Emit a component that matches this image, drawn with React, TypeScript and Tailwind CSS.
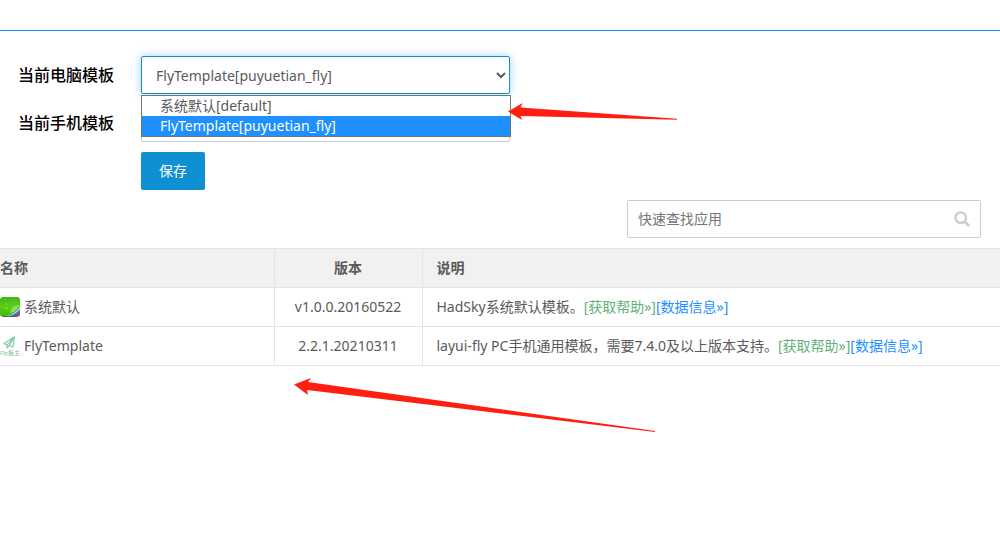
import React from 'react';

const TEMPLATES = ['系统默认[default]', 'FlyTemplate[puyuetian_fly]'];

const DefaultIcon: React.FC = () => (
  <svg width="20" height="20" viewBox="0 0 20 20" className="shrink-0" aria-hidden="true">
    <defs>
      <linearGradient id="leaf" x1="0" y1="0" x2="0" y2="1">
        <stop offset="0" stopColor="#45b51f" />
        <stop offset="0.5" stopColor="#58d012" />
        <stop offset="1" stopColor="#3fb80f" />
      </linearGradient>
      <clipPath id="tile">
        <rect x="0" y="0" width="20" height="20" rx="4" />
      </clipPath>
    </defs>
    <g clipPath="url(#tile)">
      <rect width="20" height="20" fill="#5a5f66" />
      <rect width="20" height="19" fill="url(#leaf)" />
      <path d="M6 19 C12 18 17 15 20 10 V19 Z" fill="#d4e6f5" />
      <path d="M8 19 C13 18 18 15 20 12 V19 Z" fill="#2680dd" />
      <path d="M13 19 C16 18 19 17 20 15 V19 Z" fill="#dc2f3a" />
      <path d="M10 16 C11 11 14 8 19 8 C18 12 15 15 10 16 Z" fill="#8fd67a" />
      <circle cx="6" cy="7" r="0.6" fill="#9be870" />
      <circle cx="14" cy="5" r="0.6" fill="#9be870" />
      <path d="M5 11 Q7 12 8 11" fill="none" stroke="#9be870" strokeWidth="0.8" />
    </g>
  </svg>
);

const FlyIcon: React.FC = () => (
  <svg width="20" height="20" viewBox="0 0 20 20" className="shrink-0" aria-hidden="true">
    <g fill="none" stroke="#84caa0" strokeWidth="1.1" strokeLinejoin="round">
      <path d="M14.5 0.8 L4 7.5 L7 9 L14.5 0.8 L13 11 L9.2 9.4 L14.5 0.8" />
      <path d="M7 9 V12 L9.2 9.8" />
    </g>
    <text x="0" y="19" fontSize="6" fontWeight="500" fill="#84caa0" className="font-['Noto_Sans','Noto_Sans_CJK_SC',sans-serif]">Fly板主</text>
  </svg>
);

const ROWS = [
  { name: '系统默认', Icon: DefaultIcon, version: 'v1.0.0.20160522', note: 'HadSky系统默认模板。' },
  { name: 'FlyTemplate', Icon: FlyIcon, version: '2.2.1.20210311', note: 'layui-fly PC手机通用模板，需要7.4.0及以上版本支持。' },
];

const TemplateForm: React.FC = () => (
  <form className="px-[18px] pt-[25px] flex flex-col gap-[10px]" onSubmit={(e) => e.preventDefault()}>
    <div className="flex items-center">
      <label htmlFor="pc" className="w-[123px] shrink-0 text-base font-medium text-black">当前电脑模板</label>
      <div className="relative flex-1 max-w-[369px]">
        <select
          id="pc"
          defaultValue={TEMPLATES[1]}
          className="block w-full h-[38px] px-[10px] bg-white border border-[#0e90d2] rounded-xs outline-none shadow-[0_0_8px_rgba(14,144,210,0.4)]"
        >
          {TEMPLATES.map((t) => <option key={t}>{t}</option>)}
        </select>
        <ul role="listbox" aria-label="当前电脑模板" className="absolute z-10 top-full left-0 -right-px mt-px bg-white border border-[#767676] leading-5">
          <li role="option" aria-selected="false" className="px-[18px]">{TEMPLATES[0]}</li>
          <li role="option" aria-selected="true" className="px-[18px] bg-[#1e90ff] text-white">{TEMPLATES[1]}</li>
        </ul>
      </div>
    </div>
    <div className="flex items-center">
      <label htmlFor="mobile" className="w-[123px] shrink-0 text-base font-medium text-black">当前手机模板</label>
      <div className="flex-1 max-w-[369px]">
        <select id="mobile" className="block w-full h-[38px] px-[10px] bg-white border border-[#ccc] rounded-xs outline-none">
          {TEMPLATES.map((t) => <option key={t}>{t}</option>)}
        </select>
      </div>
    </div>
    <div className="pl-[123px]">
      <button type="submit" className="block h-[38px] px-[18px] bg-[#0e90d2] text-white rounded-xs">保存</button>
    </div>
  </form>
);

const SearchBox: React.FC = () => (
  <div className="flex justify-end pt-[10px] pr-[19px] pb-[10px]">
    <div className="flex items-center w-[354px] h-[38px] px-[10px] border border-[#ccc] rounded-xs">
      <input
        type="text"
        aria-label="快速查找应用"
        placeholder="快速查找应用"
        className="flex-1 min-w-0 outline-none placeholder:text-[#757575]"
      />
      <svg width="16" height="16" viewBox="0 0 16 16" fill="none" stroke="#ccc" aria-hidden="true">
        <circle cx="6.7" cy="6.7" r="5.3" strokeWidth="2.4" />
        <path d="M10.8 10.8 L14.3 14.3" strokeWidth="2.8" strokeLinecap="round" />
      </svg>
    </div>
  </div>
);

const TemplateTable: React.FC = () => (
  <table className="w-full table-fixed border-collapse text-left">
    <thead>
      <tr className="h-[39px] bg-[#f1f1f1] border-y border-[#e4e4e4]">
        <th className="w-[274px] font-bold border-r border-[#e4e4e4]">名称</th>
        <th className="w-[148px] font-bold text-center border-r border-[#e4e4e4]">版本</th>
        <th className="pl-[14px] font-bold">说明</th>
      </tr>
    </thead>
    <tbody>
      {ROWS.map(({ name, Icon, version, note }) => (
        <tr key={name} className="h-[39px] border-b border-[#e4e4e4]">
          <td className="border-r border-[#e4e4e4]">
            <div className="flex items-center gap-1">
              <Icon />
              <span>{name}</span>
            </div>
          </td>
          <td className="text-center border-r border-[#e4e4e4]">{version}</td>
          <td className="pl-[14px]">
            {note}
            <a href="#help" className="text-[#5eb27a]">[获取帮助»]</a>
            <a href="#data" className="text-[#1e90ff]">[数据信息»]</a>
          </td>
        </tr>
      ))}
    </tbody>
  </table>
);

const App: React.FC = () => {
  return (
    <main className="relative min-h-screen bg-white text-[#5a5a5a] text-sm font-['Noto_Sans','Noto_Sans_CJK_SC',sans-serif]">
      <div className="h-[31px] border-b border-[#0e90ff]" />
      <TemplateForm />
      <SearchBox />
      <TemplateTable />

      {/* hand-drawn pointers over the page */}
      <svg width="170" height="20" viewBox="0 0 170 20" fill="#ff1f12" className="absolute z-20 left-[508px] top-[102px]" aria-hidden="true">
        <path d="M0 9.5 L14.5 1 L12.5 5.5 L169 16.8 V17.8 L12.5 14 L14 18 Z" />
      </svg>
      <svg width="362" height="56" viewBox="0 0 362 56" fill="#ff1f12" className="absolute z-20 left-[294px] top-[377px]" aria-hidden="true">
        <path d="M0 7.5 L17 1 L14 5 L361 54 V55 L13 13 L14 18 Z" />
      </svg>
    </main>
  );
};

export default App;
